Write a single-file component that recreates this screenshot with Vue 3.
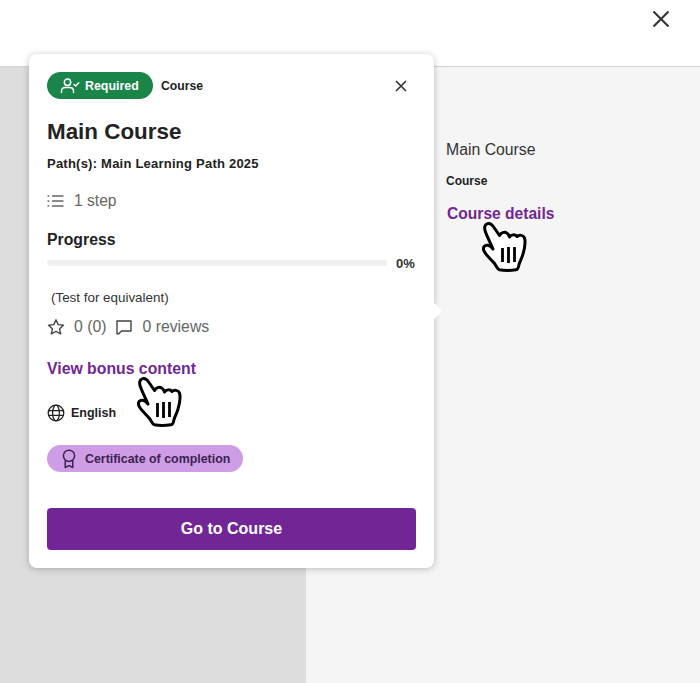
<script setup>
const hand = {
  body: 'M3.5 10C2 6 2.5 2.5 5.5 1.6C8.5.8 10.5 3 12 5.5L17.5 13.5C19 10.5 22.5 9.5 25 11.2C26.3 12 27 13.5 27.5 15C29 12.5 33 12 35 14.5C37 12.5 41.5 13 42.5 16C43.6 20 42.8 26 41 32C40 36 38 39 37 42.5C36.6 45 36 47.5 34 47.8C28 48.6 22 48.6 17.5 47.8C15 47 14.5 44 12.5 41.5C9 37 3.5 33 1.8 28.5C.6 25 3 22.6 6 23.3C8 23.8 9.5 25 11 27C8.5 21 5.5 15.5 3.5 10Z',
  bars: 'M20.5 26V40M26.5 25V41M32.5 25V40'
}
</script>

<template>
  <div class="page">
    <header class="top">
      <button class="top-close" aria-label="Close">
        <svg width="18" height="18" viewBox="0 0 18 18"><path d="M1.5 1.5L16.5 16.5M16.5 1.5L1.5 16.5" /></svg>
      </button>
    </header>

    <main class="split">
      <div class="left"></div>
      <section class="right">
        <div class="r-title">Main Course</div>
        <div class="r-type">Course</div>
        <a class="r-link">Course details</a>
        <svg class="hand hand-r" width="46" height="51" viewBox="-1 -1 46 51"><path class="hand-body" :d="hand.body" /><path class="hand-bars" :d="hand.bars" /></svg>
      </section>
    </main>

    <article class="card">
      <span class="arrow"></span>
      <div class="head">
        <span class="pill-req">
          <svg width="20" height="16" viewBox="0 0 20 16" fill="none" stroke="#fff" stroke-width="1.5" stroke-linecap="round" stroke-linejoin="round">
            <circle cx="7.5" cy="4.2" r="3.2" />
            <path d="M1.5 14.5V13C1.5 10.8 3.3 9.4 5.2 9.4H9.8C11.8 9.4 13.5 10.8 13.5 13V14.5" />
            <path d="M14 6.5L15.6 8L18.8 4.8" />
          </svg>
          Required
        </span>
        <span class="type">Course</span>
        <button class="card-close" aria-label="Close">
          <svg width="12" height="12" viewBox="0 0 12 12"><path d="M1 1L11 11M11 1L1 11" /></svg>
        </button>
      </div>

      <h1 class="title">Main Course</h1>
      <p class="paths">Path(s): Main Learning Path 2025</p>

      <div class="steps">
        <svg width="17" height="14" viewBox="0 0 17 14" fill="none" stroke="#666" stroke-width="1.3" stroke-linecap="round">
          <path d="M5.5 2H16M5.5 7H16M5.5 12H16M1 2H1.8M1 7H1.8M1 12H1.8" />
        </svg>
        <span>1 step</span>
      </div>

      <div class="progress-label">Progress</div>
      <div class="progress">
        <div class="track"></div>
        <span class="pct">0%</span>
      </div>

      <p class="equiv">(Test for equivalent)</p>

      <div class="rating">
        <svg width="18" height="18" viewBox="0 0 18 18" fill="none" stroke="#444" stroke-width="1.4" stroke-linejoin="round">
          <path d="M9 1.8L11.2 6.6L16.5 7.2L12.6 10.8L13.7 16L9 13.4L4.3 16L5.4 10.8L1.5 7.2L6.8 6.6Z" />
        </svg>
        <span class="score">0 (0)</span>
        <svg width="18" height="18" viewBox="0 0 18 18" fill="none" stroke="#444" stroke-width="1.4" stroke-linejoin="round">
          <path d="M2 3H16V13H6.5L3.8 15.8L2 15.8Z" />
        </svg>
        <span>0 reviews</span>
      </div>

      <a class="bonus">View bonus content
        <svg class="hand hand-c" width="46" height="51" viewBox="-1 -1 46 51"><path class="hand-body" :d="hand.body" /><path class="hand-bars" :d="hand.bars" /></svg>
      </a>

      <div class="lang">
        <svg width="18" height="18" viewBox="0 0 18 18" fill="none" stroke="#222" stroke-width="1.3">
          <circle cx="9" cy="9" r="7.8" />
          <ellipse cx="9" cy="9" rx="3.4" ry="7.8" />
          <path d="M1.2 6.6H16.8M1.2 11.4H16.8" />
        </svg>
        <span>English</span>
      </div>

      <div class="cert">
        <svg width="14" height="20" viewBox="0 0 14 20" fill="none" stroke="#3c2350" stroke-width="1.5" stroke-linejoin="round">
          <circle cx="7" cy="6.8" r="5.6" />
          <path d="M3.2 11.5V18.5L7 16.6L10.8 18.5V11.5" />
        </svg>
        <span>Certificate of completion</span>
      </div>

      <button class="go">Go to Course</button>
    </article>
  </div>
</template>

<style scoped>
.page {
  position: relative;
  width: 700px;
  height: 683px;
  overflow: hidden;
  display: flex;
  flex-direction: column;
  background: #fff;
  font-family: "Liberation Sans", Arial, sans-serif;
  color: #222;
}
button { font-family: inherit; border: 0; padding: 0; background: none; }
.top {
  height: 67px;
  flex: none;
  box-sizing: border-box;
  border-bottom: 1px solid #d4d4d4;
  display: flex;
  justify-content: flex-end;
  padding: 10px 29px 0 0;
}
.top-close { width: 20px; height: 18px; display: flex; justify-content: center; }
.top-close path { stroke: #333; stroke-width: 2.1; fill: none; }
.split { flex: 1; display: flex; min-height: 0; }
.left { width: 306px; flex: none; background: #ddd; }
.right {
  position: relative;
  flex: 1;
  background: #f5f5f5;
  padding: 74px 0 0 140px;
  display: flex;
  flex-direction: column;
  align-items: flex-start;
}
.r-title { font-size: 15.8px; line-height: 18px; color: #333; }
.r-type { font-size: 12px; font-weight: 700; line-height: 14px; margin-top: 15px; color: #222; }
.r-link { font-size: 15.6px; font-weight: 700; line-height: 18px; margin: 17px 0 0 1px; color: #722794; }
.hand { position: absolute; }
.hand-body { fill: #fff; stroke: #000; stroke-width: 3; stroke-linejoin: round; }
.hand-bars { fill: none; stroke: #000; stroke-width: 2.8; }
.hand-r { left: 175px; top: 154px; }
.hand-c { left: 89px; top: 16px; }

.card {
  position: absolute;
  left: 29px;
  top: 54px;
  width: 405px;
  height: 514px;
  box-sizing: border-box;
  padding: 18px 18px 0;
  background: #fff;
  border-radius: 8px;
  box-shadow: 0 1px 7px rgba(0, 0, 0, 0.24);
  display: flex;
  flex-direction: column;
  align-items: flex-start;
}
.arrow {
  position: absolute;
  right: -6px;
  top: 251px;
  width: 12px;
  height: 12px;
  background: #fff;
  border-radius: 2px;
  transform: rotate(45deg);
}
.head { display: flex; align-items: center; width: 100%; height: 27px; }
.pill-req {
  width: 106px;
  height: 27px;
  box-sizing: border-box;
  padding-left: 13px;
  border-radius: 14px;
  background: #1a8549;
  color: #fff;
  font-size: 12.4px;
  font-weight: 700;
  display: flex;
  align-items: center;
  gap: 5px;
}
.type { font-size: 12.2px; font-weight: 700; margin-left: 8px; }
.card-close { margin-left: auto; margin-right: 9px; width: 12px; height: 12px; display: flex; }
.card-close path { stroke: #333; stroke-width: 1.6; fill: none; }
.title { font-size: 22.4px; font-weight: 700; line-height: 26px; margin: 20px 0 0; color: #222; }
.paths { font-size: 13px; font-weight: 700; line-height: 15px; margin: 11px 0 0; letter-spacing: 0.23px; color: #222; }
.steps { display: flex; align-items: center; gap: 10px; margin-top: 21px; height: 18px; font-size: 15.6px; color: #666; }
.progress-label { font-size: 15.8px; font-weight: 700; line-height: 18px; margin-top: 21px; color: #222; }
.progress { display: flex; align-items: center; width: 368px; height: 16px; margin-top: 6px; }
.track { width: 340px; height: 6px; background: #f0f0f0; border-radius: 3px; }
.pct { margin-left: 9px; font-size: 13px; font-weight: 700; color: #333; }
.equiv { font-size: 13.4px; line-height: 15px; margin: 19px 0 0 4px; color: #333; }
.rating { display: flex; align-items: center; height: 20px; margin-top: 12px; font-size: 15.8px; color: #666; }
.rating .score { margin: 0 9px 0 9px; }
.rating svg:nth-of-type(2) { margin-right: 9px; }
.bonus {
  position: relative;
  font-size: 15.8px;
  font-weight: 700;
  line-height: 18px;
  margin-top: 23px;
  color: #722794;
}
.lang { display: flex; align-items: center; gap: 6px; height: 18px; margin-top: 26px; font-size: 12.5px; font-weight: 700; color: #222; }
.cert {
  width: 196px;
  height: 27px;
  box-sizing: border-box;
  margin-top: 23px;
  padding-left: 15px;
  border-radius: 14px;
  background: #cf9de6;
  color: #3c2350;
  font-size: 12.4px;
  font-weight: 700;
  display: flex;
  align-items: center;
  gap: 9px;
}
.go {
  width: 369px;
  height: 42px;
  margin-top: 36px;
  border-radius: 4px;
  background: #722696;
  color: #fff;
  font-size: 16px;
  font-weight: 700;
}
</style>
